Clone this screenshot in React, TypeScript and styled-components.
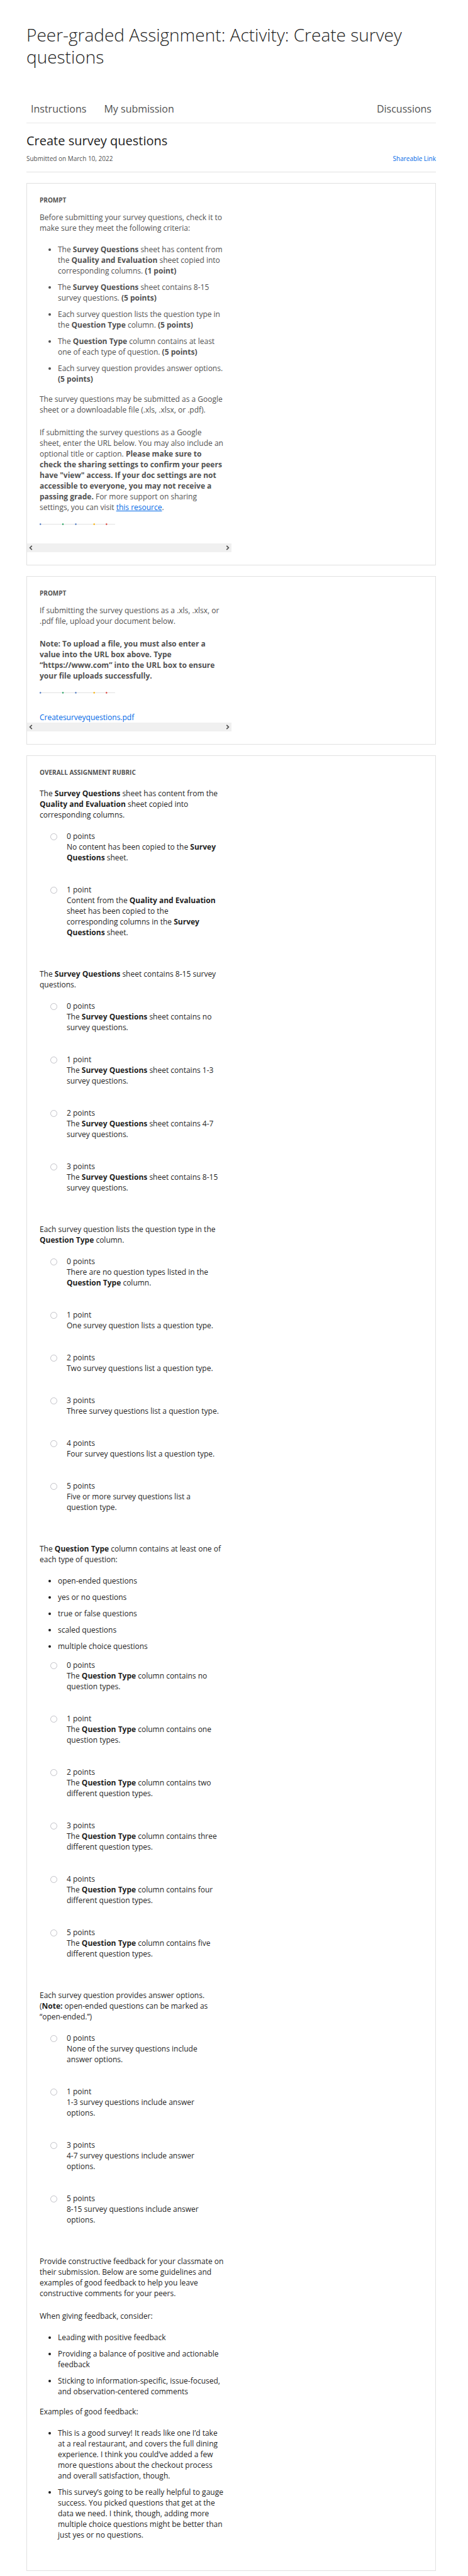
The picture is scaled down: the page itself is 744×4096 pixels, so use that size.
import React from "react";
import styled, { createGlobalStyle } from "styled-components";

const GlobalStyle = createGlobalStyle`
  *, *::before, *::after { box-sizing: border-box; }
  body {
    margin: 0;
    background: #fff;
    color: #1f1f1f;
    font-family: "Open Sans", "Noto Sans", sans-serif;
    font-size: 12px;
    line-height: 17px;
  }
  p, h1, h2, h3, ul, fieldset { margin: 0; padding: 0; }
  fieldset { border: 0; min-width: 0; }
  a { color: #0068e6; text-decoration: none; }
`;

const Page = styled.main`
  padding: 38px 51px 9px 42px;
`;

const Title = styled.h1`
  font-size: 28px;
  line-height: 35px;
  font-weight: 300;
`;

const Tabs = styled.nav`
  display: flex;
  gap: 28px;
  margin-top: 54px;
  padding: 0 7px 11px;
  border-bottom: 1px solid #e8e8e8;
`;

const Tab = styled.a<{ $end?: boolean }>`
  && { color: #525252; }
  font-size: 16px;
  line-height: 22px;
  margin-left: ${(p) => (p.$end ? "auto" : "0")};
`;

const Heading = styled.h2`
  margin-top: 16px;
  font-size: 20px;
  line-height: 24px;
  font-weight: 400;
`;

const Meta = styled.div`
  display: flex;
  justify-content: space-between;
  padding: 9px 0 14px;
  margin-bottom: 17px;
  border-bottom: 1px solid #e1e1e1;
  color: #525252;
  font-size: 10px;
  line-height: 14px;
`;

const Card = styled.section<{ $muted?: boolean; $bottom: number }>`
  padding: 18px 0 ${(p) => p.$bottom}px;
  border: 1px solid #e1e1e1;
  color: ${(p) => (p.$muted ? "#525252" : "#1f1f1f")};
  & + & { margin-top: 17px; }
`;

const Column = styled.div`
  max-width: 325px;
  padding: 0 11px 0 20px;
`;

const Label = styled.h3`
  color: #525252;
  font-size: 10px;
  line-height: 16px;
  font-weight: 700;
  text-transform: uppercase;
`;

const Text = styled.p<{ $gap?: number }>`
  margin-top: ${(p) => p.$gap ?? 17}px;
`;

const Bullets = styled.ul`
  display: flex;
  flex-direction: column;
  gap: 9px;
  margin-top: 17px;
  padding-left: 29px;
`;

const InlineLink = styled.a`
  text-decoration: underline;
`;

const Rainbow = styled.svg`
  display: block;
  width: 120px;
  height: 3px;
  margin: 17px 0 29px;
`;

const ScrollTrack = styled.div`
  display: flex;
  justify-content: space-between;
  max-width: 325px;
  height: 14px;
  background: #f0f0f0;
`;

const ScrollButton = styled.button`
  display: grid;
  place-items: center;
  width: 12px;
  height: 14px;
  padding: 0;
  border: 0;
  background: none;
  color: #505050;
`;

const Question = styled.fieldset`
  & + & { margin-top: 49px; }
`;

const Options = styled.div<{ $gap?: number }>`
  display: flex;
  flex-direction: column;
  gap: 34px;
  margin-top: ${(p) => p.$gap ?? 17}px;
  padding: 0 8px 0 17px;
`;

const OptionRow = styled.label`
  display: grid;
  grid-template-columns: 11px 1fr;
  column-gap: 15px;
  align-items: start;
`;

const Radio = styled.input`
  appearance: none;
  width: 11px;
  height: 11px;
  margin: 4px 0 0;
  border: 1px solid #c1c1c7;
  border-radius: 50%;
  background: #fff;
  &:checked { background: #0068e6; }
`;

const Points = styled.span`
  display: block;
`;

const Questions = styled.div`
  margin-top: 17px;
`;

const Feedback = styled.div`
  margin-top: 49px;
`;

const SQ = <b>Survey Questions</b>;
const QT = <b>Question Type</b>;
const QE = <b>Quality and Evaluation</b>;

type Option = [points: number, text: React.ReactNode];
type Criterion = { prompt: React.ReactNode; list?: string[]; options: Option[] };

const criteria: Criterion[] = [
  {
    prompt: <>The {SQ} sheet has content from the {QE} sheet copied into corresponding columns.</>,
    options: [
      [0, <>No content has been copied to the {SQ} sheet.</>],
      [1, <>Content from the {QE} sheet has been copied to the corresponding columns in the {SQ} sheet.</>],
    ],
  },
  {
    prompt: <>The {SQ} sheet contains 8-15 survey questions.</>,
    options: [
      [0, <>The {SQ} sheet contains no survey questions.</>],
      [1, <>The {SQ} sheet contains 1-3 survey questions.</>],
      [2, <>The {SQ} sheet contains 4-7 survey questions.</>],
      [3, <>The {SQ} sheet contains 8-15 survey questions.</>],
    ],
  },
  {
    prompt: <>Each survey question lists the question type in the {QT} column.</>,
    options: [
      [0, <>There are no question types listed in the {QT} column.</>],
      [1, "One survey question lists a question type."],
      [2, "Two survey questions list a question type."],
      [3, "Three survey questions list a question type."],
      [4, "Four survey questions list a question type."],
      [5, "Five or more survey questions list a question type."],
    ],
  },
  {
    prompt: <>The {QT} column contains at least one of each type of question:</>,
    list: [
      "open-ended questions",
      "yes or no questions",
      "true or false questions",
      "scaled questions",
      "multiple choice questions",
    ],
    options: [
      [0, <>The {QT} column contains no question types.</>],
      [1, <>The {QT} column contains one question types.</>],
      [2, <>The {QT} column contains two different question types.</>],
      [3, <>The {QT} column contains three different question types.</>],
      [4, <>The {QT} column contains four different question types.</>],
      [5, <>The {QT} column contains five different question types.</>],
    ],
  },
  {
    prompt: (
      <>
        Each survey question provides answer options. (<b>Note:</b> open-ended questions can be
        marked as “open-ended.”)
      </>
    ),
    options: [
      [0, "None of the survey questions include answer options."],
      [1, "1-3 survey questions include answer options."],
      [3, "4-7 survey questions include answer options."],
      [5, "8-15 survey questions include answer options."],
    ],
  },
];

const Divider = () => (
  <Rainbow viewBox="0 0 120 3" aria-hidden="true">
    <rect y="1" width="120" height="1" fill="#e2e2e2" />
    <circle cx="1.2" cy="1.5" r="1.2" fill="#4a74c0" />
    <circle cx="37" cy="1.5" r="1.2" fill="#1fa05c" />
    <circle cx="57.5" cy="1.5" r="1.2" fill="#4a74c0" />
    <circle cx="86.7" cy="1.5" r="1.2" fill="#f7ae00" />
    <circle cx="106.3" cy="1.5" r="1.2" fill="#dc3b35" />
  </Rainbow>
);

const Chevron = ({ d }: { d: string }) => (
  <svg width="6" height="8" viewBox="0 0 6 8" fill="none" stroke="currentColor" strokeWidth="1.7">
    <path d={d} />
  </svg>
);

const ScrollBar = () => (
  <ScrollTrack>
    <ScrollButton type="button" aria-label="Scroll left">
      <Chevron d="M4.8 0.8 1.6 4l3.2 3.2" />
    </ScrollButton>
    <ScrollButton type="button" aria-label="Scroll right">
      <Chevron d="M1.2 0.8 4.4 4l-3.2 3.2" />
    </ScrollButton>
  </ScrollTrack>
);

const RubricQuestion = ({ item, index }: { item: Criterion; index: number }) => (
  <Question aria-labelledby={`criterion-${index}`}>
    <p id={`criterion-${index}`}>{item.prompt}</p>
    {item.list && (
      <Bullets>
        {item.list.map((t) => (
          <li key={t}>{t}</li>
        ))}
      </Bullets>
    )}
    <Options $gap={item.list ? 13 : 17}>
      {item.options.map(([points, text]) => (
        <OptionRow key={points}>
          <Radio type="radio" name={`criterion-${index}`} value={points} />
          <span>
            <Points>
              {points} {points === 1 ? "point" : "points"}
            </Points>
            {text}
          </span>
        </OptionRow>
      ))}
    </Options>
  </Question>
);

export default function App() {
  return (
    <>
      <GlobalStyle />
      <Page>
        <Title>Peer-graded Assignment: Activity: Create survey questions</Title>
        <Tabs>
          <Tab href="#instructions">Instructions</Tab>
          <Tab href="#submission">My submission</Tab>
          <Tab href="#discussions" $end>Discussions</Tab>
        </Tabs>
        <Heading>Create survey questions</Heading>
        <Meta>
          <span>Submitted on March 10, 2022</span>
          <a href="#share">Shareable Link</a>
        </Meta>

        <Card $muted $bottom={20}>
          <Column>
            <Label>Prompt</Label>
            <Text $gap={11}>
              Before submitting your survey questions, check it to make sure they meet the following
              criteria:
            </Text>
            <Bullets>
              <li>The {SQ} sheet has content from the {QE} sheet copied into corresponding columns. <b>(1 point)</b></li>
              <li>The {SQ} sheet contains 8-15 survey questions. <b>(5 points)</b></li>
              <li>Each survey question lists the question type in the {QT} column. <b>(5 points)</b></li>
              <li>The {QT} column contains at least one of each type of question. <b>(5 points)</b></li>
              <li>Each survey question provides answer options. <b>(5 points)</b></li>
            </Bullets>
            <Text $gap={15}>
              The survey questions may be submitted as a Google sheet or a downloadable file (.xls,
              .xlsx, or .pdf).
            </Text>
            <Text $gap={19}>
              If submitting the survey questions as a Google sheet, enter the URL below. You may also
              include an optional title or caption.{" "}
              <b>
                Please make sure to check the sharing settings to confirm your peers have "view"
                access. If your doc settings are not accessible to everyone, you may not receive a
                passing grade.
              </b>{" "}
              For more support on sharing settings, you can visit{" "}
              <InlineLink href="#resource">this resource</InlineLink>.
            </Text>
            <Divider />
          </Column>
          <ScrollBar />
        </Card>

        <Card $muted $bottom={20}>
          <Column>
            <Label>Prompt</Label>
            <Text $gap={11}>
              If submitting the survey questions as a .xls, .xlsx, or .pdf file, upload your document
              below.
            </Text>
            <Text $gap={19}>
              <b>
                Note: To upload a file, you must also enter a value into the URL box above. Type
                “https://www.com” into the URL box to ensure your file uploads successfully.
              </b>
            </Text>
            <Divider />
            <a href="#file">Createsurveyquestions.pdf</a>
          </Column>
          <ScrollBar />
        </Card>

        <Card $bottom={48}>
          <Column>
            <Label>Overall assignment rubric</Label>
            <Questions>
              {criteria.map((item, i) => (
                <RubricQuestion key={i} item={item} index={i} />
              ))}
            </Questions>
            <Feedback>
              <p>
                Provide constructive feedback for your classmate on their submission. Below are some
                guidelines and examples of good feedback to help you leave constructive comments for
                your peers.
              </p>
              <Text $gap={19}>When giving feedback, consider:</Text>
              <Bullets>
                <li>Leading with positive feedback</li>
                <li>Providing a balance of positive and actionable feedback</li>
                <li>Sticking to information-specific, issue-focused, and observation-centered comments</li>
              </Bullets>
              <Text $gap={15}>Examples of good feedback:</Text>
              <Bullets>
                <li>
                  This is a good survey! It reads like one I’d take at a real restaurant, and covers
                  the full dining experience. I think you could’ve added a few more questions about
                  the checkout process and overall satisfaction, though.
                </li>
                <li>
                  This survey’s going to be really helpful to gauge success. You picked questions
                  that get at the data we need. I think, though, adding more multiple choice
                  questions might be better than just yes or no questions.
                </li>
              </Bullets>
            </Feedback>
          </Column>
        </Card>
      </Page>
    </>
  );
}
